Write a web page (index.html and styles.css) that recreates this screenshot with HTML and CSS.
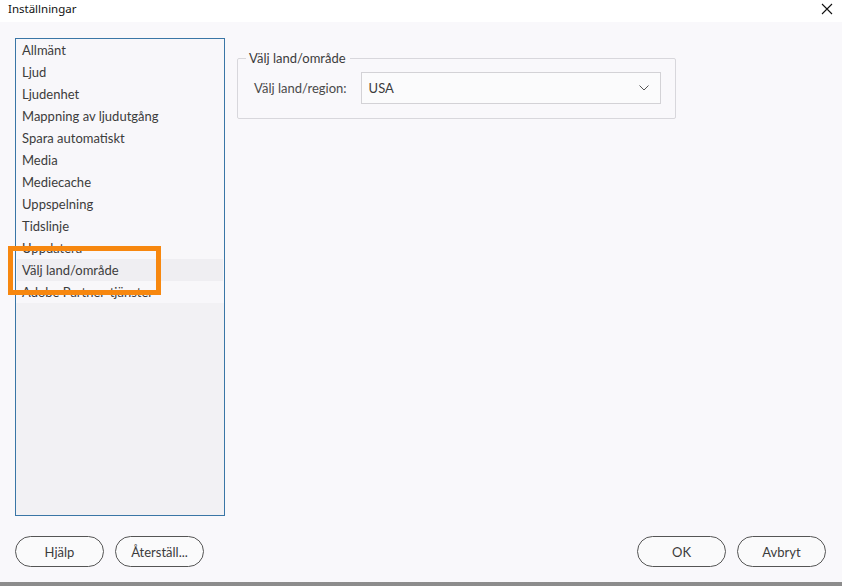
FILE: index.html
```html
<!DOCTYPE html>
<html lang="sv">
<head>
<meta charset="utf-8"/>
<title>Inställningar</title>
<link rel="stylesheet" href="styles.css">
</head>
<body>
<div class="dialog">
  <div class="titlebar">
    <span class="title">Inställningar</span>
    <span class="close">
      <svg width="12" height="12" viewBox="0 0 12 12"><path d="M1 1L11 11M11 1L1 11" stroke="#111" stroke-width="1.1" fill="none"/></svg>
    </span>
  </div>

  <div class="main">
    <ul class="nav">
      <li>Allmänt</li>
      <li>Ljud</li>
      <li>Ljudenhet</li>
      <li>Mappning av ljudutgång</li>
      <li>Spara automatiskt</li>
      <li>Media</li>
      <li>Mediecache</li>
      <li>Uppspelning</li>
      <li>Tidslinje</li>
      <li>Uppdatera</li>
      <li class="selected">Välj land/område</li>
      <li>Adobe Partner-tjänster</li>
    </ul>

    <div class="content">
      <fieldset class="group">
        <legend>Välj land/område</legend>
        <div class="row">
          <label for="country">Välj land/region:</label>
          <div class="select" id="country">
            <span>USA</span>
            <svg width="10" height="6" viewBox="0 0 10 6"><path d="M0.5 0.5L5 5L9.5 0.5" stroke="#555" stroke-width="1" fill="none"/></svg>
          </div>
        </div>
      </fieldset>
    </div>
  </div>

  <div class="footer">
    <div class="btns">
      <button>Hjälp</button>
      <button>Återställ...</button>
    </div>
    <div class="btns">
      <button>OK</button>
      <button>Avbryt</button>
    </div>
  </div>

  <!-- annotation -->
  <div class="mark"></div>
</div>
</body>
</html>
```

FILE: styles.css
```css
* {
  box-sizing: border-box;
}
body {
  margin: 0;
  height: 586px;
  background: linear-gradient(#c8c8c8, #8c8c8c);
  font-family: Lato, "Noto Sans", sans-serif;
  color: #3c3c3c;
}
.dialog {
  position: relative;
  width: 842px;
  height: 582px;
  background: #f9f8fb;
  display: flex;
  flex-direction: column;
}
.titlebar {
  height: 22px;
  background: #fff;
  display: flex;
  justify-content: space-between;
  padding: 1px 9px 0 8px;
  font-family: "Noto Sans", sans-serif;
  font-size: 11.5px;
  color: #111;
}
.close {
  display: flex;
  padding-top: 2px;
}
.main {
  display: flex;
  gap: 12px;
  padding: 16px 0 0 15px;
}
.nav {
  list-style: none;
  margin: 0;
  padding: 0 1px;
  width: 210px;
  height: 478px;
  border: 1px solid #3a76a6;
  background: linear-gradient(#f8f7fa 0, #f8f7fa 264px, #f2f1f4 264px);
  font-size: 13px;
}
.nav li {
  height: 22px;
  line-height: 22px;
  padding-left: 5px;
}
.nav li.selected {
  background: #efeef2;
}
.content {
  padding-top: 12px;
}
.group {
  width: 439px;
  margin: 0;
  padding: 0 14px 14px 16px;
  border: 1px solid #d8d7dc;
  border-radius: 2px;
}
.group legend {
  font-size: 13px;
  padding: 0 4px 0 3px;
  margin-left: -8px;
  color: #3c3c3c;
}
.row {
  display: flex;
  align-items: center;
  gap: 14px;
  margin-top: 6px;
  font-size: 13px;
}
.row label {
  color: #4a4a4a;
}
.select {
  width: 300px;
  height: 32px;
  border: 1px solid #d3d2d6;
  background: #fbfbfc;
  display: flex;
  align-items: center;
  justify-content: space-between;
  padding: 0 11px 0 7px;
}
.footer {
  display: flex;
  justify-content: space-between;
  padding: 20px 16px 0 15px;
}
.btns {
  display: flex;
  gap: 11px;
}
.btns button {
  width: 89px;
  height: 31px;
  border: 1px solid #555;
  border-radius: 16px;
  background: #fafafb;
  font: 13px Lato, "Noto Sans", sans-serif;
  color: #3c3c3c;
}
.mark {
  position: absolute;
  left: 8px;
  top: 246px;
  width: 153px;
  height: 49px;
  border: 5px solid #f7870f;
}
```
